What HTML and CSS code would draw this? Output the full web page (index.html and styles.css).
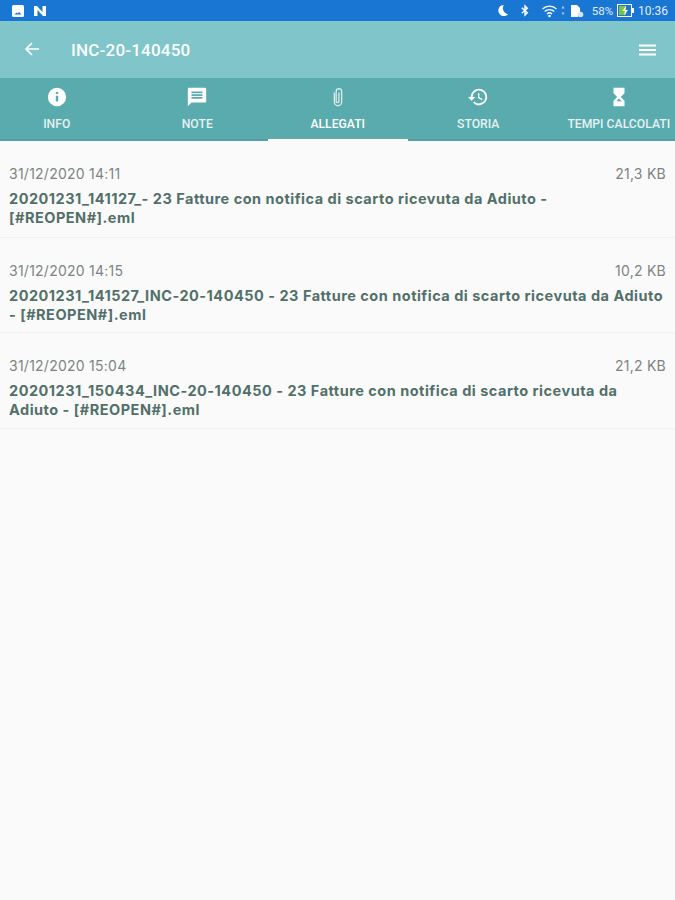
FILE: index.html
```html
<!DOCTYPE html>
<html lang="it">

<head>
    <meta charset="UTF-8">
    <meta name="viewport" content="width=device-width, initial-scale=1.0">
    <title>INC-20-140450</title>
    <link rel="stylesheet" href="styles.css">
</head>

<body>

    <!-- Barra di stato -->
    <div class="status-bar">
        <div class="status-left">
            <svg class="status-icon" viewBox="0 0 14 14"><rect x="1" y="1" width="12" height="12" rx="1.5" fill="#fff"/><path d="M3.5 10.5l2-2 1.2 1 1.3-1.5 2.5 2.5z" fill="#1976d2"/></svg>
            <svg class="status-icon" viewBox="0 0 14 14"><path d="M1 2h3l5.5 6V2H13v10h-3L4.500 6v6H1z" fill="#fff"/></svg>
        </div>
        <div class="status-right">
            <svg class="status-moon" viewBox="0 0 14 14"><path d="M8.500 1a6 6 0 1 0 4.500 10A6.500 6.500 0 0 1 8.500 1z" fill="#fff"/></svg>
            <svg class="status-bt" viewBox="0 0 10 14"><path d="M1.500 4l6 5.500L5 12V2l2.500 2.500-6 5.500" fill="none" stroke="#fff" stroke-width="1.500"/></svg>
            <svg class="status-wifi" viewBox="0 0 16 14"><path d="M1 5a10 10 0 0 1 14 0M3.200 7.500a7 7 0 0 1 9.600 0M5.500 10a3.600 3.600 0 0 1 5 0" fill="none" stroke="#fff" stroke-width="1.300"/><circle cx="8" cy="12" r="1.300" fill="#fff"/></svg>
            <svg class="status-arrows" viewBox="0 0 5 14"><path d="M2.500 1l2 3.500h-4zM2.500 13l-2-3.500h4z" fill="#a9c8ea"/></svg>
            <svg class="status-sim" viewBox="0 0 14 14"><path d="M1 1h6l3 3v3.500L8 13H1z" fill="#fff"/><circle cx="10.500" cy="10.500" r="2.800" fill="#d6e6f6"/></svg>
            <span class="status-text">58%</span>
            <svg class="status-battery" viewBox="0 0 17 13"><rect x="0.500" y="0.500" width="14" height="12" fill="#1976d2" stroke="#fff"/><rect x="2" y="2" width="7" height="9" fill="#7cc243"/><rect x="15" y="4" width="2" height="5" fill="#fff"/><path d="M9 1.500L5.500 7h2.500l-1 4.500L11 6H8.500z" fill="#fff"/></svg>
            <span class="status-text status-time">10:36</span>
        </div>
    </div>

    <!-- Barra superiore -->
    <header class="app-bar">
        <svg class="back-icon" viewBox="0 0 16 16"><path d="M15 8H2M8 2L2 8l6 6" fill="none" stroke="#fff" stroke-width="1.700"/></svg>
        <h1 class="app-title">INC-20-140450</h1>
        <svg class="menu-icon" viewBox="0 0 17 12"><path d="M0 1.500h17M0 6h17M0 10.500h17" stroke="#fff" stroke-width="1.800"/></svg>
    </header>

    <!-- Schede -->
    <nav class="tabs">
        <div class="tab">
            <svg class="tab-icon" viewBox="0 0 24 24"><path d="M12 2a10 10 0 1 0 0 20 10 10 0 0 0 0-20zm1.300 15h-2.600v-6.500h2.600zm0-8.200h-2.600V6.500h2.600z" fill="#fff"/></svg>
            <span>INFO</span>
        </div>
        <div class="tab">
            <svg class="tab-icon" viewBox="0 0 24 24"><path d="M21 2H3a1 1 0 0 0-1 1v19l4-4h15a1 1 0 0 0 1-1V3a1 1 0 0 0-1-1zM18 14H6v-2h12zm0-3H6V9h12zm0-3H6V6h12z" fill="#fff"/></svg>
            <span>NOTE</span>
        </div>
        <div class="tab tab-active">
            <svg class="tab-icon" viewBox="0 0 24 24"><path d="M8 7v10.500a4 4 0 0 0 8 0V6a3 3 0 0 0-6 0v10.500a1.500 1.500 0 0 0 3 0V7" fill="none" stroke="#d5e9ea" stroke-width="1.500"/></svg>
            <span>ALLEGATI</span>
        </div>
        <div class="tab">
            <svg class="tab-icon" viewBox="0 0 24 24"><path d="M13 3a9 9 0 0 0-9 9H1l4 4 4-4H6a7 7 0 1 1 2.100 5l-1.400 1.400A9 9 0 1 0 13 3zm-1 5v5l4.300 2.500.7-1.200-3.500-2.100V8z" fill="#fff"/></svg>
            <span>STORIA</span>
        </div>
        <div class="tab">
            <svg class="tab-icon" viewBox="0 0 24 24"><path d="M6 2h12v6l-4 4 4 4v6H6v-6l4-4-4-4z" fill="#fff"/><path d="M9 16.500h6l-3-2.800z" fill="#5aabad"/></svg>
            <span>TEMPI CALCOLATI</span>
        </div>
    </nav>

    <!-- Elenco allegati -->
    <main class="list">
        <div class="item item-first">
            <div class="item-head">
                <span>31/12/2020 14:11</span>
                <span>21,3 KB</span>
            </div>
            <p class="item-name">20201231_141127_- 23 Fatture con notifica di scarto ricevuta da Adiuto -<br>[#REOPEN#].eml</p>
        </div>
        <div class="item">
            <div class="item-head">
                <span>31/12/2020 14:15</span>
                <span>10,2 KB</span>
            </div>
            <p class="item-name">20201231_141527_INC-20-140450 - 23 Fatture con notifica di scarto ricevuta da Adiuto<br>- [#REOPEN#].eml</p>
        </div>
        <div class="item item-last">
            <div class="item-head">
                <span>31/12/2020 15:04</span>
                <span>21,2 KB</span>
            </div>
            <p class="item-name">20201231_150434_INC-20-140450 - 23 Fatture con notifica di scarto ricevuta da<br>Adiuto - [#REOPEN#].eml</p>
        </div>
    </main>

</body>

</html>
```
FILE: styles.css
```css
/* Generali */
body {
    margin: 0;
    height: 900px;
    overflow: hidden;
    background-color: #fafafa;
    font-family: "Inter", "Noto Sans", sans-serif;
}

/* Barra di stato */
.status-bar {
    height: 21px;
    background-color: #1976d2;
    display: flex;
    justify-content: space-between;
    align-items: center;
    padding: 0 7px 0 11px;
}

.status-left,
.status-right {
    display: flex;
    align-items: center;
}

.status-left {
    gap: 8px;
}

.status-icon {
    width: 14px;
    height: 14px;
}

.status-moon {
    width: 13px;
    height: 13px;
    margin-right: 11px;
}

.status-bt {
    width: 10px;
    height: 13px;
    margin-right: 11px;
}

.status-wifi {
    width: 17px;
    height: 14px;
    margin-right: 3px;
}

.status-arrows {
    width: 4px;
    height: 13px;
    margin-right: 5px;
}

.status-sim {
    width: 14px;
    height: 14px;
    margin-right: 8px;
}

.status-battery {
    width: 17px;
    height: 13px;
    margin: 0 4px 0 4px;
}

.status-text {
    font-family: "Roboto", sans-serif;
    font-size: 11.500px;
    color: #e3eefa;
}

.status-time {
    font-size: 12px;
}

/* Barra superiore */
.app-bar {
    height: 57px;
    box-sizing: border-box;
    background-color: #80c5c9;
    display: flex;
    align-items: center;
    padding: 1px 19px 0 24px;
}

.back-icon {
    width: 16px;
    height: 16px;
    margin: -3px 31px 0 0;
}

.app-title {
    margin: 0;
    flex: 1;
    font-family: "Roboto", sans-serif;
    font-size: 17px;
    font-weight: 500;
    letter-spacing: 0.2px;
    color: #fbfefe;
}

.menu-icon {
    width: 17px;
    height: 12px;
    margin-top: -1px;
}

/* Schede */
.tabs {
    height: 63px;
    background-color: #5aabad;
    box-shadow: inset 0 -2px 0 #559fa2;
    display: flex;
    overflow: hidden;
}

.tab {
    flex: 0 0 140.5px;
    height: 63px;
    box-sizing: border-box;
    display: flex;
    flex-direction: column;
    align-items: center;
    padding-top: 8px;
    font-family: "Roboto", sans-serif;
    font-size: 12.200px;
    font-weight: 500;
    line-height: 14px;
    color: #e4f2f2;
    white-space: nowrap;
}

.tab:first-child {
    margin-left: -13.500px;
}

.tab-active {
    border-bottom: 2px solid #ffffff;
    color: #ffffff;
}

.tab-icon {
    width: 22px;
    height: 22px;
    margin-bottom: 9px;
}

/* Elenco allegati */
.item {
    height: 95px;
    box-sizing: border-box;
    padding: 24px 9px 0;
    border-bottom: 1px solid #f0f0f0;
}

.item-first {
    height: 97px;
}

.item-last {
    height: 96px;
}

.item-head {
    display: flex;
    justify-content: space-between;
    font-size: 14px;
    line-height: 18px;
    letter-spacing: 0.25px;
    color: #7c8583;
}

.item-name {
    margin: 7px 0 0;
    font-size: 14.500px;
    font-weight: 700;
    line-height: 18.500px;
    letter-spacing: 0.5px;
    color: #52706a;
    white-space: nowrap;
}
```
